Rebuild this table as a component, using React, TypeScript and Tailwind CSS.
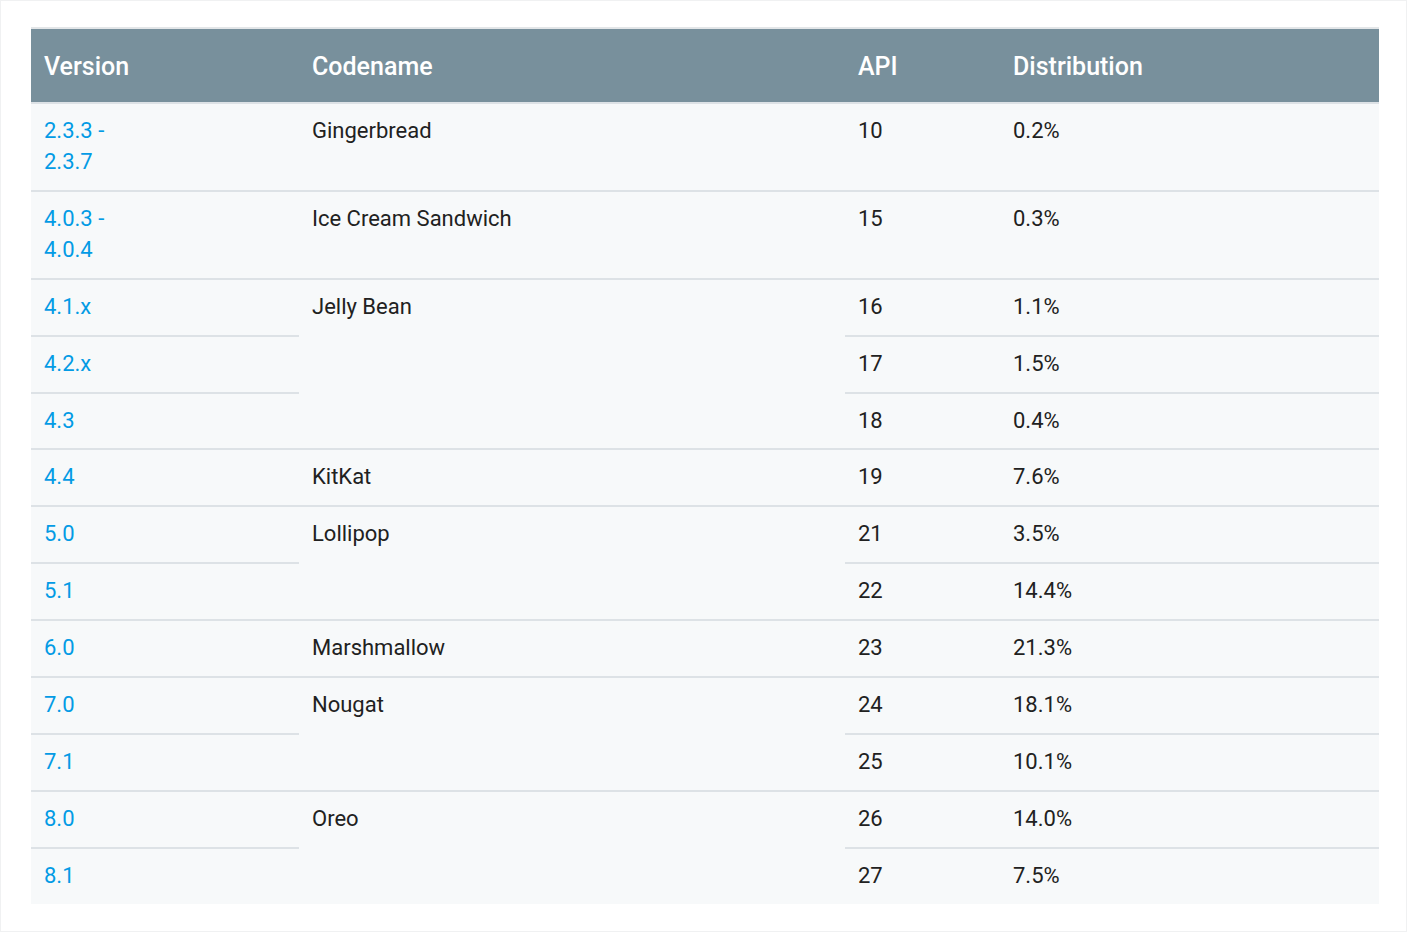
import React from 'react'

interface Row {
  version: string[]
  codename?: string
  span?: number
  api: string
  dist: string
}

const rows: Row[] = [
  { version: ['2.3.3 -', '2.3.7'], codename: 'Gingerbread', span: 1, api: '10', dist: '0.2%' },
  { version: ['4.0.3 -', '4.0.4'], codename: 'Ice Cream Sandwich', span: 1, api: '15', dist: '0.3%' },
  { version: ['4.1.x'], codename: 'Jelly Bean', span: 3, api: '16', dist: '1.1%' },
  { version: ['4.2.x'], api: '17', dist: '1.5%' },
  { version: ['4.3'], api: '18', dist: '0.4%' },
  { version: ['4.4'], codename: 'KitKat', span: 1, api: '19', dist: '7.6%' },
  { version: ['5.0'], codename: 'Lollipop', span: 2, api: '21', dist: '3.5%' },
  { version: ['5.1'], api: '22', dist: '14.4%' },
  { version: ['6.0'], codename: 'Marshmallow', span: 1, api: '23', dist: '21.3%' },
  { version: ['7.0'], codename: 'Nougat', span: 2, api: '24', dist: '18.1%' },
  { version: ['7.1'], api: '25', dist: '10.1%' },
  { version: ['8.0'], codename: 'Oreo', span: 2, api: '26', dist: '14.0%' },
  { version: ['8.1'], api: '27', dist: '7.5%' },
]

const cell = 'px-[13px] pt-[11px] pb-[12.9px] align-top border-t-2 border-[#dde2e6]'
const head = 'px-[13px] pt-[22px] pb-[19px] text-[25px] leading-[32px] font-medium'

export default function App() {
  return (
    <div
      className="h-[932px] border border-[#f0f1f2] bg-white pl-[30px] pt-[26px]"
      style={{ fontFamily: 'Roboto, "Noto Sans", sans-serif' }}
    >
      <table className="w-[1348px] border-collapse table-fixed border-t-2 border-t-[#e3e6e8]">
        <colgroup>
          <col className="w-[268px]" />
          <col className="w-[546px]" />
          <col className="w-[155px]" />
          <col className="w-[379px]" />
        </colgroup>
        <thead>
          <tr className="bg-[#78909c] text-white text-left">
            <th className={head}>Version</th>
            <th className={head}>Codename</th>
            <th className={head}>API</th>
            <th className={head}>Distribution</th>
          </tr>
        </thead>
        <tbody className="bg-[#f7f9fa] text-[22px] leading-[31px] text-[#212121]">
          {rows.map((r, i) => (
            <tr key={i}>
              <td className={`${cell} text-[#039be5]`}>
                {r.version.map((v, j) => (
                  <div key={j}>{v}</div>
                ))}
              </td>
              {r.codename && (
                <td rowSpan={r.span} className={cell}>
                  {r.codename}
                </td>
              )}
              <td className={cell}>{r.api}</td>
              <td className={cell}>{r.dist}</td>
            </tr>
          ))}
        </tbody>
      </table>
    </div>
  )
}
